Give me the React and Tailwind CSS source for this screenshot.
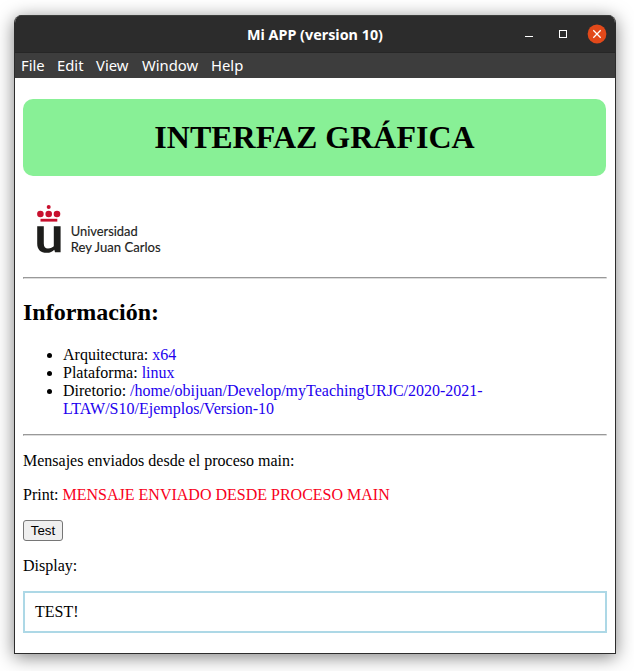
const MENU = [
  ["File", "w-6"],
  ["Edit", "w-[27px]"],
  ["View", "w-[34px]"],
  ["Window", "w-[57px]"],
  ["Help", "w-8"],
];

function TitleBar() {
  return (
    <header className="grid h-[38px] shrink-0 grid-cols-[1fr_auto_1fr] items-center border-b border-[#262626] border-t border-t-[#3b3d3b] bg-[#2c2c2c] font-['Noto_Sans','Open_Sans',sans-serif]">
      <span />
      <svg width="138" height="20" className="block">
        <text x="1" y="16" fontSize="14.5" fontWeight="700" fill="#fff" textLength="136" lengthAdjust="spacingAndGlyphs">
          Mi APP (version 10)
        </text>
      </svg>
      <svg width="96" height="20" viewBox="0 0 96 20" className="mr-2 block justify-self-end">
        <path d="M14 12.5h8" stroke="#fff" />
        <rect x="48.5" y="6.5" width="7" height="7" fill="none" stroke="#fff" />
        <circle cx="86" cy="10" r="9.4" fill="#e2491a" />
        <path d="M82.3 6.3l7.4 7.4M89.7 6.3l-7.4 7.4" stroke="#fff" strokeWidth="1.3" />
      </svg>
    </header>
  );
}

function MenuBar() {
  return (
    <nav className="flex h-[25px] shrink-0 items-center gap-3 bg-[#3d3d3d] pl-1.5 font-['Noto_Sans','Open_Sans',sans-serif] text-[14.8px] leading-[25px] text-white">
      {MENU.map(([label, width]) => (
        <span key={label} className={`${width} whitespace-nowrap`}>
          {label}
        </span>
      ))}
    </nav>
  );
}

function Logo() {
  return (
    <svg width="150" height="64" viewBox="0 0 150 64" className="mt-[22px] block shrink-0">
      <g fill="#c8102e">
        <circle cx="25.7" cy="9" r="2" />
        <circle cx="17.4" cy="16" r="3.3" />
        <circle cx="25.7" cy="16" r="3.3" />
        <circle cx="34" cy="16" r="3.3" />
        <rect x="17.5" y="20.8" width="16.8" height="2.8" />
      </g>
      <path
        d="M14.2 28.2h6.6v17.3c0 3.4 1.4 5 4.2 5 2.7 0 4.6-1.1 5.8-2.3v-20h6.8v26h-5.6l-.7-2.5c-1.8 1.9-4.3 3.1-7.5 3.1-6.3 0-9.6-3.2-9.6-9.3z"
        fill="#1d1d1b"
      />
      <g fill="#1d1d1b" stroke="#1d1d1b" strokeWidth="0.15" fontFamily="Lato, sans-serif" fontSize="12.6">
        <text x="47.7" y="37.6" textLength="67" lengthAdjust="spacingAndGlyphs">Universidad</text>
        <text x="47.7" y="53.5" textLength="90" lengthAdjust="spacingAndGlyphs">Rey Juan Carlos</text>
      </g>
    </svg>
  );
}

function Rule() {
  return <hr className="h-0.5 shrink-0 border border-t-[#999999] border-r-[#eeeeee] border-b-[#dddddd] border-l-[#9a9a9a]" />;
}

export default function App() {
  return (
    <div className="h-[671px] w-[634px] overflow-hidden bg-white pt-[15px] pl-3.5">
      <div className="flex h-[639px] w-[602px] flex-col overflow-hidden rounded-t-lg border-x border-b border-[#2c2c2c] bg-white shadow-[0_3px_18px_rgba(0,0,0,0.5)]">
        <TitleBar />
        <MenuBar />
        <main className="flex flex-col px-2 font-['Liberation_Serif',serif] text-base leading-[18px] text-black">
          <h1 className="mt-[21px] mr-px h-[77px] rounded-[10px] bg-[#88f096] py-5 text-center text-[32px] leading-[37px] font-bold">
            INTERFAZ GRÁFICA
          </h1>
          <Logo />
          <div className="mt-[15px]">
            <Rule />
          </div>
          <h2 className="mt-5 text-2xl leading-[27px] font-bold">Información:</h2>
          <ul className="mt-5 list-disc pl-10">
            <li>
              Arquitectura: <span className="text-[#2200ee]">x64</span>
            </li>
            <li>
              Plataforma: <span className="text-[#2200ee]">linux</span>
            </li>
            <li>
              Diretorio:{" "}
              <span className="text-[#2200ee]">
                /home/obijuan/Develop/myTeachingURJC/2020-2021-
                <br />
                LTAW/S10/Ejemplos/Version-10
              </span>
            </li>
          </ul>
          <div className="mt-4">
            <Rule />
          </div>
          <p className="mt-4">Mensajes enviados desde el proceso main:</p>
          <p className="mt-4">
            Print: <span className="text-[#f80020]">MENSAJE ENVIADO DESDE PROCESO MAIN</span>
          </p>
          <button className="mt-4 h-[21px] w-10 rounded-[3px] border border-[#767676] bg-[#efefef] text-center font-['Liberation_Sans',sans-serif] text-[13.333px] leading-[19px]">
            Test
          </button>
          <p className="mt-4">Display:</p>
          <div className="mt-4 border-2 border-[#add8e6] p-2.5">TEST!</div>
        </main>
      </div>
    </div>
  );
}
